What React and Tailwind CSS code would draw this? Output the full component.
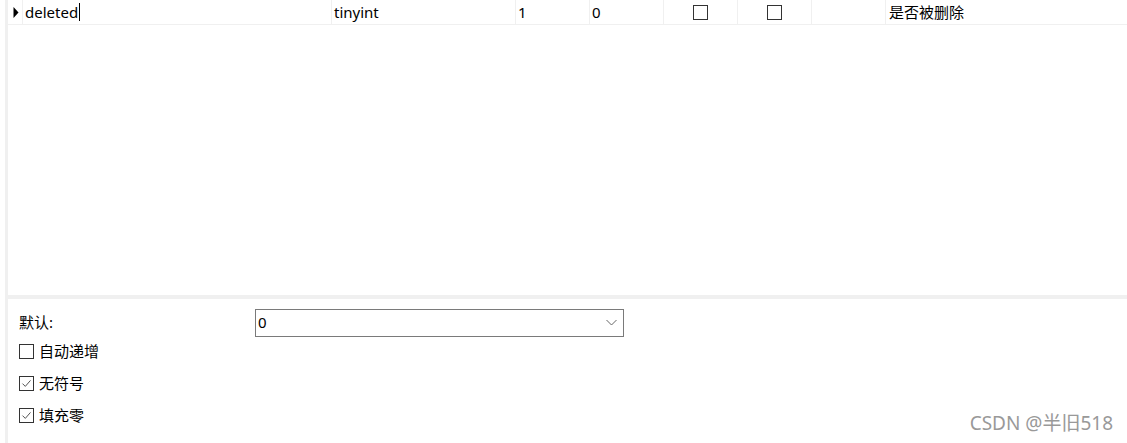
const font = { fontFamily: '"Noto Sans", "Noto Sans CJK SC", sans-serif' };

const cols = [
  { w: "w-[309px]", text: "deleted", cursor: true },
  { w: "w-[184px]", text: "tinyint" },
  { w: "w-[74px]", text: "1" },
  { w: "w-[74px]", text: "0" },
  { w: "w-[74px]", box: true },
  { w: "w-[74px]", box: true },
  { w: "w-[74px]" },
  { w: "flex-1", text: "是否被删除" },
];

const Box = ({ checked }) => (
  <span className="w-[15px] h-[15px] border border-[#333] bg-white flex items-center justify-center shrink-0">
    {checked && (
      <svg width="11" height="11" viewBox="0 0 11 11">
        <path d="M1.5 5.6 L4.3 8.4 L9.5 2.4" fill="none" stroke="#555" strokeWidth="1" />
      </svg>
    )}
  </span>
);

export default function App() {
  return (
    <div className="w-[1127px] h-[443px] bg-white flex text-[15px] text-black overflow-hidden" style={font}>
      <div className="w-[5px] shrink-0" />
      <div className="w-[3px] shrink-0 bg-[#f0f0f0]" />
      <div className="flex-1 flex flex-col">
        <div className="h-[295px]">
          <div className="flex h-[25px] border-b border-[#f0f0f0]">
            <div className="w-[15px] flex items-center justify-end pr-[3px] border-r border-[#f0f0f0]">
              <svg width="6" height="11" viewBox="0 0 6 11">
                <path d="M0.5 0 L5.5 5.5 L0.5 11 Z" fill="#000" />
              </svg>
            </div>
            {cols.map((c, i) => (
              <div
                key={i}
                className={`${c.w} ${i === 0 ? "w-[308px]" : ""} flex items-center ${c.box ? "justify-center" : "pl-[2px]"} ${i < cols.length - 1 ? "border-r border-[#f0f0f0]" : ""}`}
              >
                {c.box ? (
                  <Box />
                ) : c.text ? (
                  <span className={`${i === 7 ? "pl-[1px]" : ""} flex items-center`}>
                    {c.text}
                    {c.cursor && <span className="inline-block w-px h-[18px] bg-black ml-[1px]" />}
                  </span>
                ) : null}
              </div>
            ))}
          </div>
        </div>
        <div className="h-[4px] bg-[#f0f0f0]" />
        <div className="flex-1 relative pl-[11px] pt-[10px]">
          <div className="flex items-center h-[27px]">
            <span className="w-[236px]">默认:</span>
            <div className="w-[369px] h-[28px] border border-[#7a7a7a] flex items-center justify-between pl-[2px] pr-[6px]">
              <span>0</span>
              <svg width="11" height="7" viewBox="0 0 11 7">
                <path d="M0.5 1 L5.5 6 L10.5 1" fill="none" stroke="#666" strokeWidth="1" />
              </svg>
            </div>
          </div>
          <div className="flex flex-col mt-[7px] gap-[16px]">
            <label className="flex items-center gap-[5px] h-[16px]">
              <Box />
              <span>自动递增</span>
            </label>
            <label className="flex items-center gap-[5px] h-[16px]">
              <Box checked />
              <span>无符号</span>
            </label>
            <label className="flex items-center gap-[5px] h-[16px]">
              <Box checked />
              <span>填充零</span>
            </label>
          </div>
          <div className="absolute right-[14px] bottom-[6px] text-[19px] text-[#999]">
            CSDN @半旧518
          </div>
        </div>
      </div>
    </div>
  );
}
